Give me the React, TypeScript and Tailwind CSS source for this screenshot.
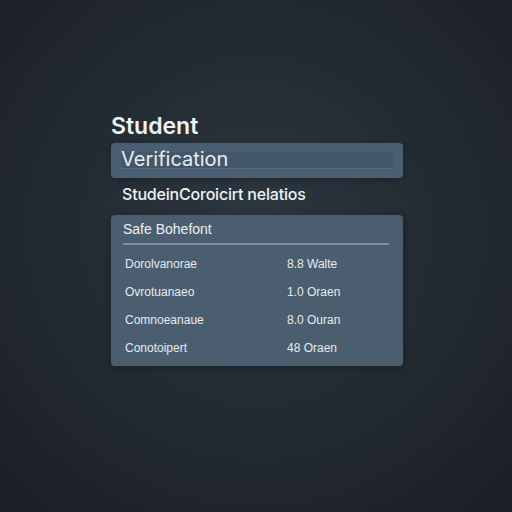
import React from 'react';

const rows = [
  { label: 'Dorolvanorae', value: '8.8 Walte' },
  { label: 'Ovrotuanaeo', value: '1.0 Oraen' },
  { label: 'Comnoeanaue', value: '8.0 Ouran' },
  { label: 'Conotoipert', value: '48 Oraen' },
];

export default function App() {
  return (
    <div className="w-[512px] h-[512px] bg-[radial-gradient(circle_at_50%_45%,#2c3740_0%,#242c33_45%,#1a1f24_100%)] font-['Liberation_Sans','Arial',sans-serif] text-[#eef2f5]">
      <div className="pt-[113px] pl-[111px] w-[403px]">
        {/* Title */}
        <h1 className="font-['Inter',sans-serif] text-[23px] font-semibold leading-[27px]">Student</h1>

        <div className="mt-[3px] h-[35px] rounded-[4px] bg-[#4a5f71] px-[10px] py-[9px] shadow-[0_2px_6px_rgba(0,0,0,0.25)]">
          <div className="relative h-[17px] bg-[#43576a] border-b border-[#586d7e]">
            <span className="absolute left-0 top-[-6px] font-['Inter',sans-serif] text-[20px] leading-[26px] text-[#e8edf1]">Verification</span>
          </div>
        </div>

        <p className="mt-[5px] ml-[11px] font-['Inter',sans-serif] text-[16px] font-medium leading-[22px] tracking-[-0.2px]">
          StudeinCoroicirt nelatios
        </p>

        {/* Card */}
        <div className="mt-[10px] rounded-[4px] bg-[#4a5e70] px-[12px] pt-[5px] pb-[9px] shadow-[0_2px_8px_rgba(0,0,0,0.3)]">
          <div className="text-[14px] leading-[18px] text-[#edf1f4]">Safe Bohefont</div>
          <div className="mt-[5px] mr-[2px] h-[2px] bg-[#7d8e9c]" />
          <div className="mt-[10px] flex flex-col gap-[10px]">
            {rows.map((r) => (
              <div key={r.label} className="flex h-[18px] items-center text-[12px] text-[#e6ebef]">
                <span className="w-[164px] pl-[2px]">{r.label}</span>
                <span>{r.value}</span>
              </div>
            ))}
          </div>
        </div>
      </div>
    </div>
  );
}
